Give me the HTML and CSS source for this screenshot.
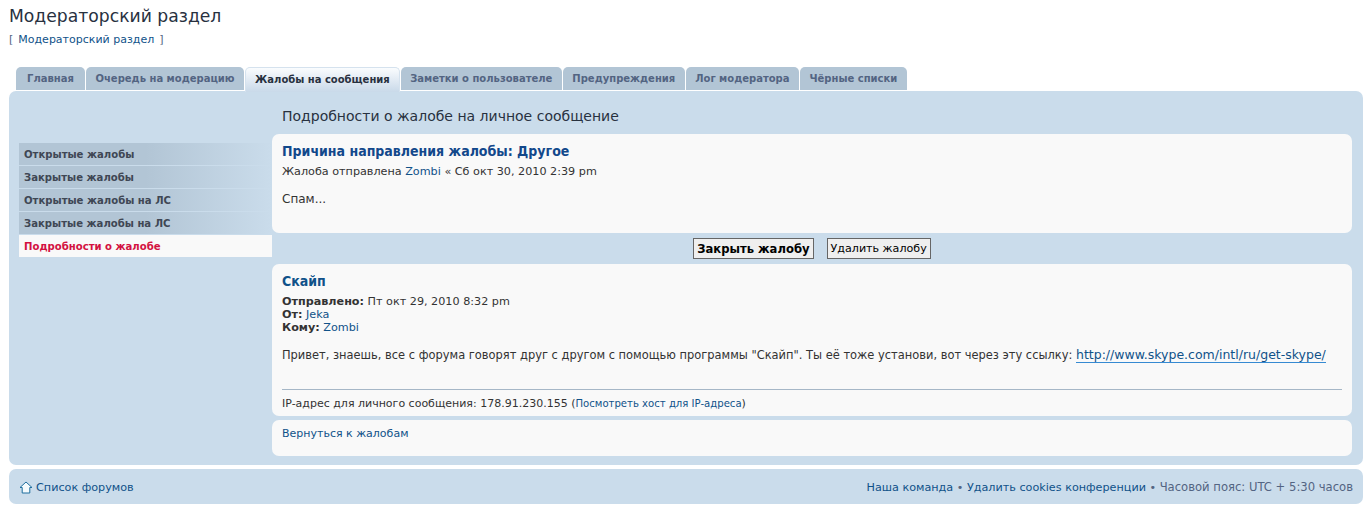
FILE: index.html
```html
<!DOCTYPE html>
<html lang="ru">
<head>
    <meta charset="UTF-8">
    <title>Модераторский раздел</title>
    <link rel="stylesheet" href="styles.css">
</head>
<body>
    <h2 class="page-title">Модераторский раздел</h2>
    <p class="crumbs">[ <a href="#">Модераторский раздел</a> ]</p>

    <ul class="tabs">
        <li class="tab"><a href="#">Главная</a></li>
        <li class="tab"><a href="#">Очередь на модерацию</a></li>
        <li class="tab tab-active"><a href="#">Жалобы на сообщения</a></li>
        <li class="tab"><a href="#">Заметки о пользователе</a></li>
        <li class="tab"><a href="#">Предупреждения</a></li>
        <li class="tab"><a href="#">Лог модератора</a></li>
        <li class="tab"><a href="#">Чёрные списки</a></li>
    </ul>

    <div class="panel">
        <ul class="side-menu">
            <li><a href="#">Открытые жалобы</a></li>
            <li><a href="#">Закрытые жалобы</a></li>
            <li><a href="#">Открытые жалобы на ЛС</a></li>
            <li><a href="#">Закрытые жалобы на ЛС</a></li>
            <li class="side-active"><a href="#">Подробности о жалобе</a></li>
        </ul>

        <div class="main">
            <h2 class="main-title">Подробности о жалобе на личное сообщение</h2>

            <div class="box box-report">
                <h3 class="box-title box-title-report">Причина направления жалобы: Другое</h3>
                <p class="author">Жалоба отправлена <a href="#">Zombi</a> « Сб окт 30, 2010 2:39 pm</p>
                <p class="content">Спам...</p>
            </div>

            <div class="actions">
                <button class="btn btn-main">Закрыть жалобу</button>
                <button class="btn">Удалить жалобу</button>
            </div>

            <div class="box box-message">
                <h3 class="box-title">Скайп</h3>
                <p class="meta"><strong>Отправлено:</strong> Пт окт 29, 2010 8:32 pm<br>
                <strong>От:</strong> <a href="#">Jeka</a><br>
                <strong>Кому:</strong> <a href="#">Zombi</a></p>
                <p class="content message-text">Привет, знаешь, все с форума говорят друг с другом с помощью программы "Скайп". Ты её тоже установи, вот через эту ссылку: <a class="post-link" href="#">http://www.skype.com/intl/ru/get-skype/</a></p>
                <p class="ip-line">IP-адрес для личного сообщения: 178.91.230.155 (<a href="#">Посмотреть хост для IP-адреса</a>)</p>
            </div>

            <div class="box box-back">
                <a href="#">Вернуться к жалобам</a>
            </div>
        </div>
    </div>

    <div class="footer">
        <a class="home-link" href="#">
            <svg class="home-icon" width="14" height="13" viewBox="0 0 14 13">
                <path d="M7 1 L13 6.5 L10.8 6.5 L10.8 12 L3.2 12 L3.2 6.5 L1 6.5 Z" fill="#f4fafd" stroke="#1f6f9f" stroke-width="1" stroke-linejoin="round"/>
            </svg>
            Список форумов
        </a>
        <div class="footer-right"><a href="#">Наша команда</a> • <a href="#">Удалить cookies конференции</a> • <span class="timezone">Часовой пояс: UTC + 5:30 часов</span></div>
    </div>
</body>
</html>
```

FILE: styles.css
```css
* {
    margin: 0;
    padding: 0;
    box-sizing: border-box;
}

body {
    font-family: "DejaVu Sans", Verdana, sans-serif;
    font-size: 11px;
    color: #536482;
    background: #fff;
    padding: 0 8px 0 9px;
}

a {
    color: #105289;
    text-decoration: none;
}

ul {
    list-style: none;
}

.page-title {
    font-size: 17.2px;
    font-weight: normal;
    color: #28313f;
    line-height: 20px;
    padding-top: 6px;
}

.crumbs {
    font-size: 11px;
    line-height: 14px;
    margin-top: 7px;
    word-spacing: 1.5px;
}

.crumbs a {
    word-spacing: 0;
}

/* tabs */
.tabs {
    display: flex;
    align-items: flex-end;
    height: 25px;
    margin-top: 19px;
    padding-left: 7px;
    gap: 1px;
    position: relative;
    z-index: 1;
}

.tab {
    height: 23px;
    margin-bottom: 1px;
    background: #b2c5d5;
    border-radius: 5px 5px 0 0;
}

.tab:first-child {
    width: 69px;
    text-align: center;
}

.tab a {
    display: block;
    padding: 0 9.5px;
    font-size: 10px;
    font-weight: bold;
    line-height: 23px;
    color: #536482;
}

.tab:first-child a {
    padding: 0;
}

.tab-active {
    height: 25px;
    margin-bottom: -1px;
    background: linear-gradient(#fafcfe, #c9d9e9);
    border: 1px solid #d5e2ee;
    border-bottom: 0;
}

.tab-active a {
    color: #28313f;
    line-height: 24px;
    padding: 0 9px;
}

/* main panel */
.panel {
    display: flex;
    height: 374px;
    background: #cadceb;
    border-radius: 7px;
    padding: 0 11px 8px 10px;
}

.side-menu {
    width: 253px;
    flex: none;
    padding-top: 52px;
}

.side-menu li {
    height: 22px;
    margin-bottom: 1px;
    background: linear-gradient(to right, #b2c5d5 50%, #cadceb);
}

.side-menu a {
    display: block;
    padding: 1px 0 0 5px;
    font-size: 10.1px;
    font-weight: bold;
    line-height: 21px;
    color: #3f4754;
}

.side-menu .side-active {
    background: #f9f9f9;
}

.side-menu .side-active a {
    color: #d31141;
}

.main {
    flex: 1;
    min-width: 0;
}

.main-title {
    font-size: 14px;
    font-weight: normal;
    line-height: 18px;
    color: #28313f;
    padding: 16px 0 0 10px;
    height: 43px;
}

.box {
    background: #f9f9f9;
    border-radius: 7px;
    padding: 0 10px;
    color: #333;
}

.box-report {
    height: 99px;
    padding-top: 8px;
}

.box-title {
    font-family: "DejaVu Sans Condensed", "DejaVu Sans", sans-serif;
    font-size: 14px;
    font-weight: bold;
    line-height: 18px;
    color: #105289;
}

.box-title-report {
    color: #12488b;
}

.author {
    font-size: 11.2px;
    line-height: 14px;
    margin-top: 5px;
    color: #333;
}

.content {
    font-size: 12px;
    line-height: 16px;
    margin-top: 12px;
    color: #333;
}

.actions {
    display: flex;
    justify-content: center;
    align-items: center;
    gap: 13px;
    height: 31px;
}

.btn {
    height: 21px;
    padding: 0 3px;
    font-family: inherit;
    font-size: 11.1px;
    color: #000;
    background: #efefef;
    border: 1px solid #666;
}

.btn-main {
    font-size: 11.6px;
    font-weight: bold;
}

.box-message {
    height: 152px;
    padding-top: 8px;
}

.meta {
    font-size: 11.2px;
    line-height: 13px;
    margin-top: 5px;
    color: #333;
}

.message-text {
    margin-top: 13px;
    font-size: 11.45px;
    white-space: nowrap;
}

.post-link {
    font-size: 12.5px;
    color: #105289;
    border-bottom: 1px solid #368ad2;
}

.ip-line {
    font-size: 11px;
    line-height: 14px;
    margin-top: 26px;
    padding-top: 7px;
    border-top: 1px solid #a6b7c7;
    color: #333;
}

.ip-line a {
    font-size: 10.1px;
}

.box-back {
    height: 36px;
    margin-top: 4px;
    padding-top: 7px;
    font-size: 11px;
    line-height: 14px;
}

/* footer */
.footer {
    display: flex;
    justify-content: space-between;
    align-items: center;
    height: 35px;
    margin-top: 4px;
    padding: 1px 10px 0;
    background: #cadceb;
    border-radius: 7px;
    font-size: 11.2px;
}

.home-link {
    display: flex;
    align-items: center;
    gap: 3px;
}

.home-icon {
    flex: none;
}

.timezone {
    font-size: 11.6px;
}
```
